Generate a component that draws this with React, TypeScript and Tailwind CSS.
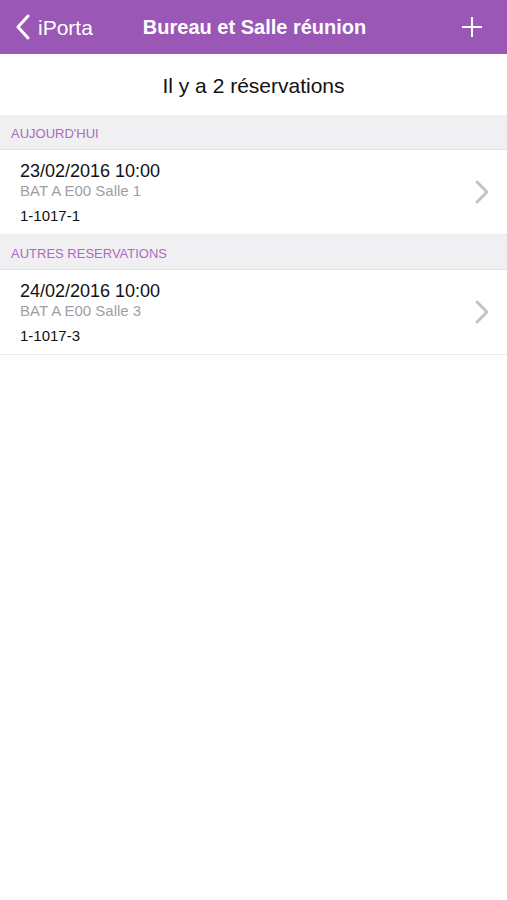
const sections = [
  {
    title: "AUJOURD'HUI",
    items: [{ date: "23/02/2016 10:00", place: "BAT A E00 Salle 1", ref: "1-1017-1" }],
  },
  {
    title: "AUTRES RESERVATIONS",
    items: [{ date: "24/02/2016 10:00", place: "BAT A E00 Salle 3", ref: "1-1017-3" }],
  },
];

function Chevron() {
  return (
    <svg width="18" height="26" viewBox="0 0 18 26" fill="none">
      <path d="M4 3l10 10-10 10" stroke="#c3c3c8" strokeWidth="3" strokeLinecap="round" strokeLinejoin="round" />
    </svg>
  );
}

export default function App() {
  return (
    <div className="min-h-[900px] bg-white font-['Liberation_Sans',Arial,sans-serif]">
      <div className="h-[54px] bg-[#9b57b5] flex items-center relative text-white">
        <div className="flex items-center pl-[15px] gap-[7px]">
          <svg width="16" height="26" viewBox="0 0 16 26" fill="none">
            <path d="M13 2L3 13l10 11" stroke="white" strokeWidth="3" strokeLinecap="round" strokeLinejoin="round" />
          </svg>
          <span className="text-[21px] leading-none">iPorta</span>
        </div>
        <div className="ml-[50px] text-[20px] font-semibold leading-none">Bureau et Salle réunion</div>
        <div className="ml-auto pr-[24px]">
          <svg width="22" height="22" viewBox="0 0 22 22">
            <path d="M11 1v20M1 11h20" stroke="white" strokeWidth="2" />
          </svg>
        </div>
      </div>
      <div className="h-[61px] flex items-center justify-center pt-[3px] text-[21px] text-[#111]">
        Il y a 2 réservations
      </div>
      {sections.map((s) => (
        <div key={s.title}>
          <div className="h-[35px] bg-[#f0f0f2] border-b border-[#e4e4e8] flex items-center pt-[3px] px-[11px] text-[13px] text-[#a86cc1]">
            {s.title}
          </div>
          {s.items.map((it) => (
            <div key={it.ref} className="h-[85px] flex items-center border-b border-[#ececee] pl-[20px] pr-[16px]">
              <div className="flex-1 flex flex-col pt-[2px]">
                <span className="text-[18px] leading-[21px] text-[#111]">{it.date}</span>
                <span className="text-[15px] leading-[18px] text-[#a0a0a4]">{it.place}</span>
                <span className="text-[15px] leading-[19px] mt-[6px] text-[#111]">{it.ref}</span>
              </div>
              <Chevron />
            </div>
          ))}
        </div>
      ))}
    </div>
  );
}
